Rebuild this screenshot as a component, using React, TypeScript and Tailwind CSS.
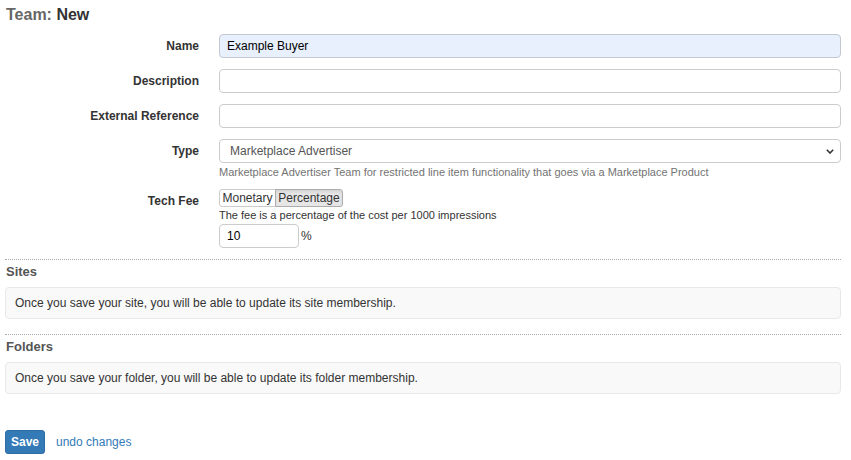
import React from "react";

const font = { fontFamily: '"Liberation Sans", Arial, sans-serif' };

const Row: React.FC<{ label: string; children: React.ReactNode; className?: string }> = ({ label, children, className }) => (
  <div className={"flex items-start " + (className || "mb-[11px]")}>
    <label className="w-[194px] shrink-0 text-right font-bold text-[12px] text-[#333] leading-[24px]">{label}</label>
    <div className="ml-[20px] flex-1 min-w-0">{children}</div>
  </div>
);

const TextInput: React.FC<{ value?: string; filled?: boolean; className?: string }> = ({ value, filled, className }) => (
  <input
    defaultValue={value}
    style={font}
    className={
      "block h-[24px] rounded-[4px] border px-[7px] text-[12px] text-[#000] outline-none " +
      (filled ? "bg-[#e8f0fe] border-[#c4c9d1] " : "bg-white border-[#ccc] ") +
      (className || "w-full")
    }
  />
);

const Section: React.FC<{ title: string; text: string }> = ({ title, text }) => (
  <div>
    <div className="border-t border-dotted border-[#aaa]" />
    <h3 className="pt-[2px] leading-[20px] text-[13px] font-bold text-[#555] mb-[5px] pl-[1px]">{title}</h3>
    <div className="h-[32px] rounded-[4px] border border-[#e8e8e8] bg-[#f9f9f9] px-[9px] flex items-center text-[12px] text-[#333]">
      {text}
    </div>
  </div>
);

export default function App() {
  return (
    <div style={font} className="w-[851px] h-[460px] bg-white pl-[5px] pr-[10px] text-[#333] overflow-hidden">
      <h2 className="pt-[5px] pl-[1px] text-[16px] font-bold leading-[20px] mb-[9px]">
        <span className="text-[#666]">Team: </span>
        <span className="text-[#333]">New</span>
      </h2>

      <Row label="Name">
        <TextInput value="Example Buyer" filled />
      </Row>
      <Row label="Description">
        <TextInput />
      </Row>
      <Row label="External Reference">
        <TextInput />
      </Row>
      <Row label="Type" className="mb-[9px]">
        <div className="relative">
          <select
            style={font}
            className="block w-full h-[24px] appearance-none rounded-[4px] border border-[#ccc] bg-white pl-[10px] pr-[24px] text-[12px] text-[#555] outline-none"
          >
            <option>Marketplace Advertiser</option>
          </select>
          <svg className="pointer-events-none absolute right-[7px] top-[10px]" width="8" height="5" viewBox="0 0 8 5">
            <path d="M0.8 0.8 L4 4 L7.2 0.8" fill="none" stroke="#333" strokeWidth="1.6" />
          </svg>
        </div>
        <p className="mt-[2px] text-[11px] leading-[15px] text-[#737373]">
          Marketplace Advertiser Team for restricted line item functionality that goes via a Marketplace Product
        </p>
      </Row>
      <Row label="Tech Fee">
        <div className="flex h-[18px] text-[12px] leading-[16px] text-[#333]">
          <button className="h-[18px] w-[57px] rounded-l-[3px] border border-[#ccc] bg-white">Monetary</button>
          <button className="h-[18px] w-[68px] -ml-px rounded-r-[3px] border border-[#adadad] bg-[#e6e6e6] shadow-[inset_0_2px_3px_rgba(0,0,0,0.08)]">
            Percentage
          </button>
        </div>
        <p className="mt-[1px] text-[11px] leading-[15px] text-[#333]">The fee is a percentage of the cost per 1000 impressions</p>
        <div className="flex items-center mt-px">
          <TextInput value="10" className="w-[80px]" />
          <span className="ml-[2px] text-[12px] text-[#333]">%</span>
        </div>
      </Row>

      <Section title="Sites" text="Once you save your site, you will be able to update its site membership." />
      <div className="h-[15px]" />
      <Section title="Folders" text="Once you save your folder, you will be able to update its folder membership." />

      <div className="mt-[36px] flex items-center">
        <button className="h-[24px] w-[40px] rounded-[3px] border border-[#2e6da4] bg-[#337ab7] text-[12px] font-bold text-white">
          Save
        </button>
        <a href="#" className="ml-[11px] text-[12px] text-[#337ab7]">undo changes</a>
      </div>
    </div>
  );
}
